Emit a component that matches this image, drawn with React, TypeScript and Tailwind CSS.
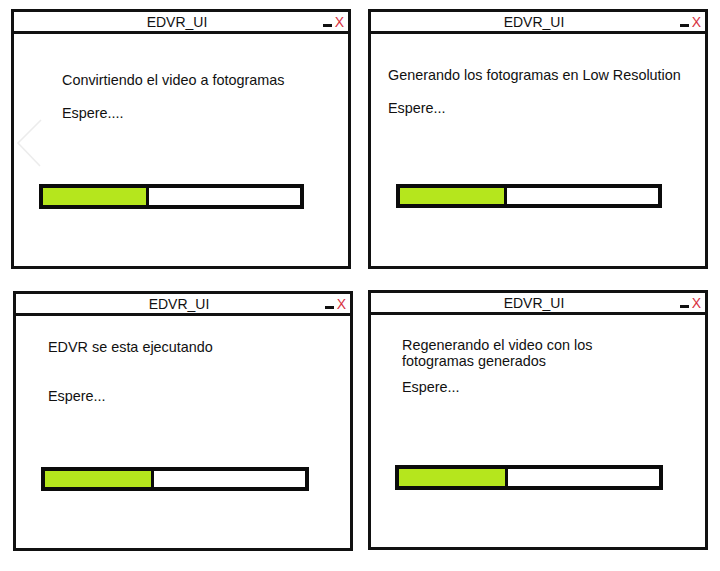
const steps = [
    {
        lines: ["Convirtiendo el video a fotogramas"],
        wait: "Espere....",
        wrap: "",
        text: "pt-[38px] pl-[48px]",
        waitGap: "mt-[17px]",
        bar: "mt-[63px] w-[265px] h-[25px] ml-[25px]",
        fill: "w-[106px]",
        chevron: true,
    },
    {
        lines: ["Generando los fotogramas en Low Resolution"],
        wait: "Espere...",
        wrap: "h-[259px]",
        text: "pt-[33px] pl-[17px]",
        waitGap: "mt-[17px]",
        bar: "mt-[68px] w-[266px] h-[24px] ml-[25px]",
        fill: "w-[107px]",
        chevron: false,
    },
    {
        lines: ["EDVR se esta ejecutando"],
        wait: "Espere...",
        wrap: "ml-[2px] mt-px",
        text: "pt-[23px] pl-[32px]",
        waitGap: "mt-[33px]",
        bar: "mt-[63px] w-[268px] h-[24px] ml-[25px]",
        fill: "w-[109px]",
        chevron: false,
    },
    {
        lines: ["Regenerando el video con los", "fotogramas generados"],
        wait: "Espere...",
        wrap: "",
        text: "pt-[22px] pl-[31px]",
        waitGap: "mt-[10px]",
        bar: "mt-[70px] w-[268px] h-[25px] ml-[24px]",
        fill: "w-[109px]",
        chevron: false,
    },
]

type Step = (typeof steps)[number]

function Window({ step }: { step: Step }) {
    return (
        <div className={`relative w-[340px] h-[260px] border-[3px] border-[#111] bg-white flex flex-col ${step.wrap}`}>
            <div className="grid grid-cols-[1fr_auto_1fr] items-center h-[19px] border-b-[3px] border-[#111] box-content">
                <div></div>
                <div className="text-[14px] leading-[16px] text-[#111] -translate-x-[4px]">EDVR_UI</div>
                <div className="flex items-baseline justify-end pr-[4px] text-[14px] leading-[16px]">
                    <span className="inline-block w-[9px] h-[3px] bg-[#111] mr-[3px]"></span>
                    <span className="text-[#d8313f]">X</span>
                </div>
            </div>
            <div className={`text-[14.4px] leading-[16px] text-[#111] ${step.text}`}>
                {step.lines.map((line) => (
                    <div key={line}>{line}</div>
                ))}
                <div className={step.waitGap}>{step.wait}</div>
            </div>
            <div className={`flex border-4 border-[#0b0b0b] bg-white ${step.bar}`}>
                <div className={`h-full bg-[#b5e61d] border-r-[3px] border-[#0b0b0b] ${step.fill}`}></div>
            </div>
            {step.chevron && (
                // faint arrow left over on the first screen
                <svg className="absolute left-0 top-[104px]" width="32" height="54" viewBox="0 0 32 54">
                    <path d="M27 4 L4 27 L26 50" fill="none" stroke="#ececec" strokeWidth="1.5" />
                </svg>
            )}
        </div>
    )
}

export default function App() {
    return (
        <div className="w-[720px] h-[571px] bg-white pt-[9px] pl-[11px] font-['Liberation_Sans',Arial,sans-serif]">
            <div className="grid grid-cols-[340px_340px] gap-x-[17px] gap-y-[21px] items-start">
                {steps.map((step, i) => (
                    <Window key={i} step={step} />
                ))}
            </div>
        </div>
    )
}
